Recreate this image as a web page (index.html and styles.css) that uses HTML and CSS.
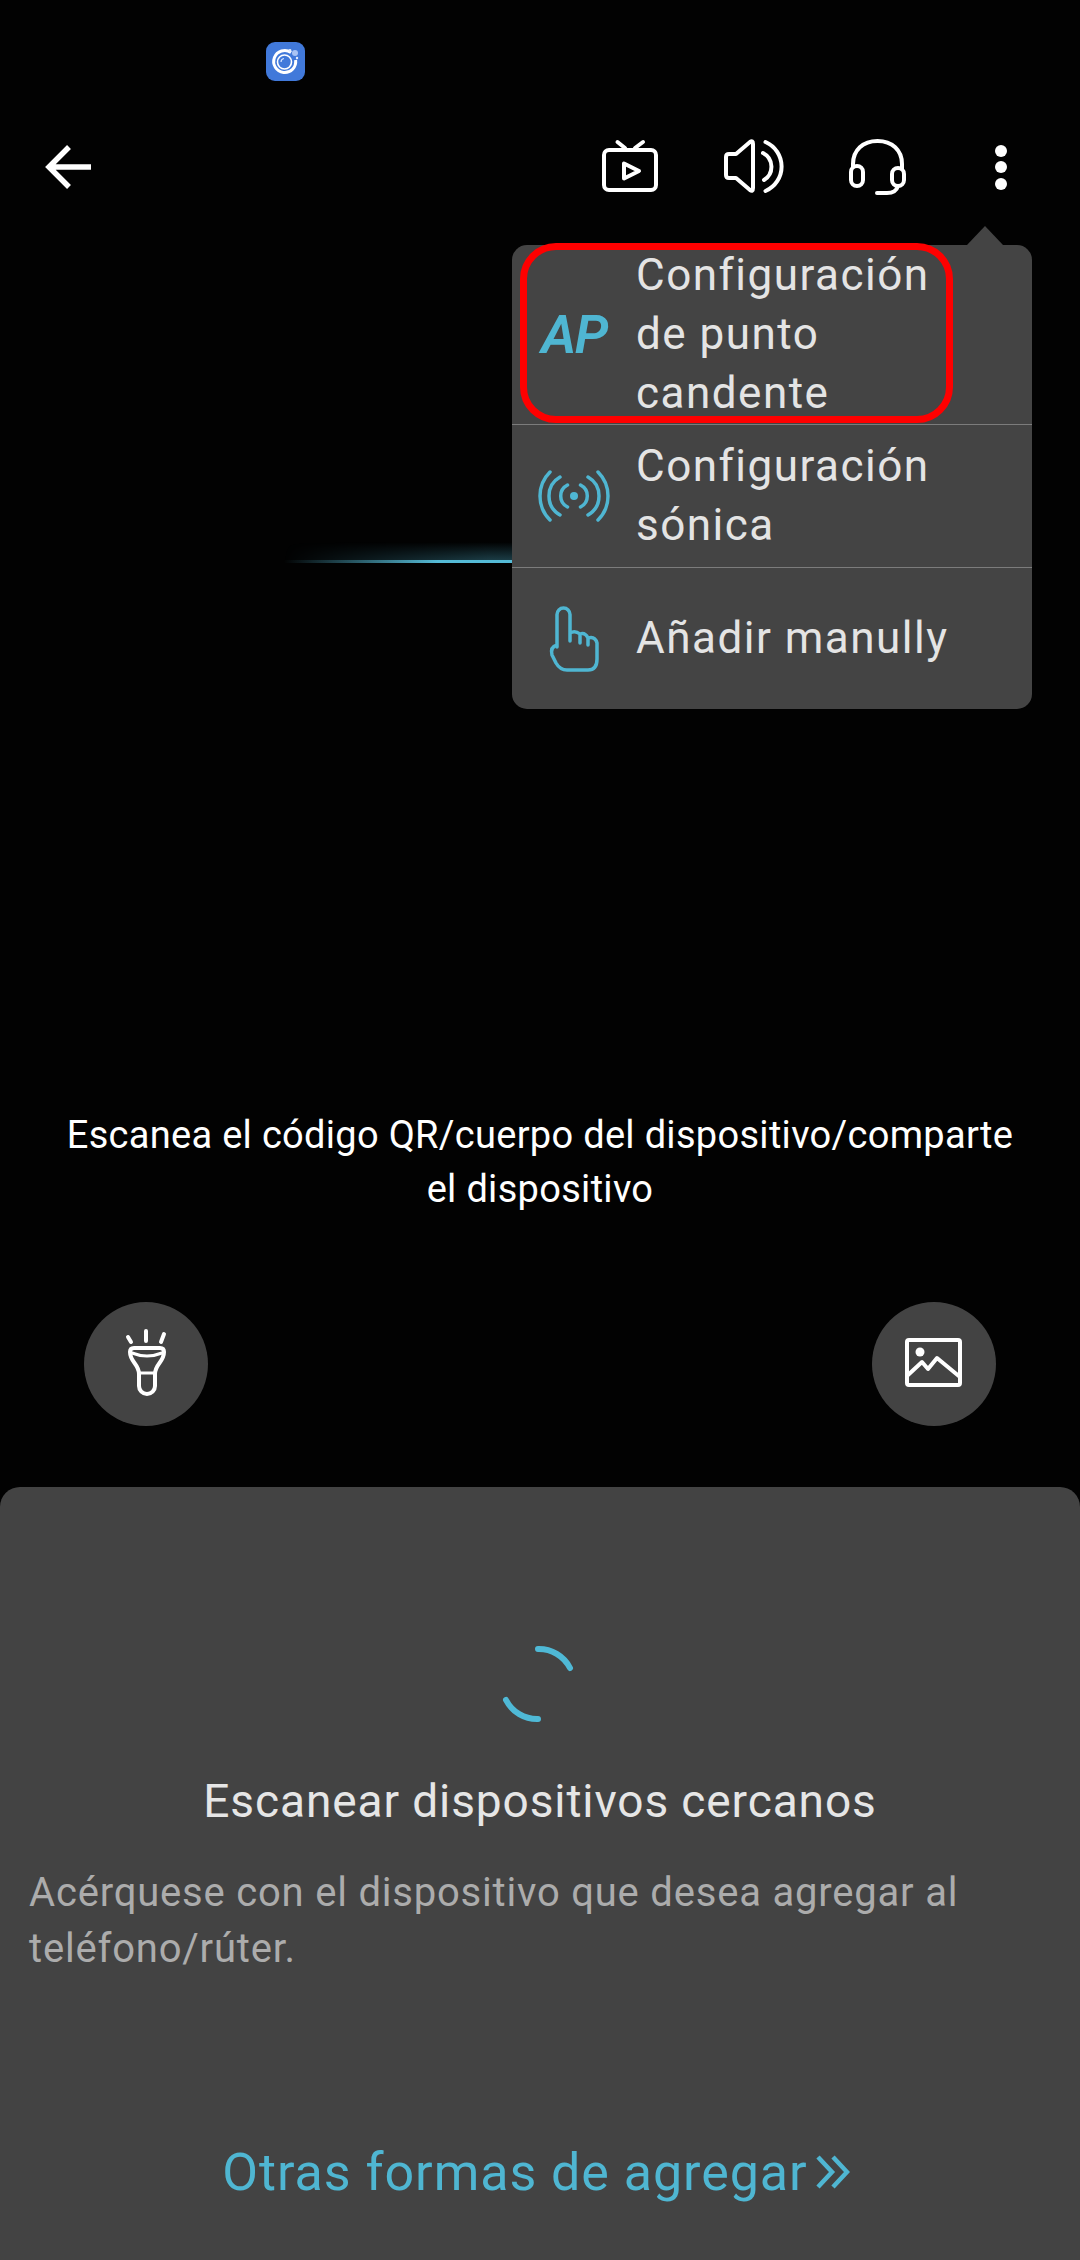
FILE: index.html
```html
<!DOCTYPE html>
<html lang="es">
<head>
<meta charset="utf-8">
<title>Escanear</title>
<link rel="stylesheet" href="styles.css">
</head>
<body>
<div class="screen">
  <div class="status">
    <svg class="app-icon" viewBox="0 0 39 39"><rect width="39" height="39" rx="9" fill="#4179da"/><path d="M25 10.500A11 11 0 1 0 29.600 18" fill="none" stroke="#fff" stroke-width="3"/><circle cx="18.500" cy="20" r="7" fill="none" stroke="#fff" stroke-width="1.600"/><path d="M15 20a3.500 3.500 0 0 1 3-3.500" fill="none" stroke="#cfe0ff" stroke-width="1.200"/><circle cx="29" cy="11" r="3" fill="#a9c4f5"/><circle cx="24" cy="8.500" r="1.400" fill="#e6eeff"/><circle cx="31" cy="16" r="1.200" fill="#e6eeff"/></svg>
  </div>
  <div class="toolbar">
    <svg class="tool" viewBox="0 0 64 64"><path d="M13 32H55M33 12L13 32L33 52" class="line wide"/></svg>
    <div class="tool-group">
      <svg class="tool" viewBox="0 0 64 64"><rect x="7" y="15" width="52" height="40" rx="5" class="line"/><path d="M20.500 7L28 13M46 7L38 13" class="line"/><path d="M27 28.500V43.500L42 36Z" class="line"/></svg>
      <svg class="tool" viewBox="0 0 64 64"><path d="M32 9Q32 5 29 7L15 19H8Q5 19 5 22V40Q5 43 8 43H15L29 55Q32 57 32 53Z" class="line"/><path d="M42 18A15.500 15.500 0 0 1 43 45M44.500 7A26.700 26.700 0 0 1 44.500 56" class="line"/></svg>
      <svg class="tool" viewBox="0 0 64 64"><path d="M8 32V29C8 15 18 6 32.500 6S57 15 57 29V34" class="line"/><rect x="6" y="31" width="12" height="20" rx="6" class="line"/><rect x="47" y="33" width="12" height="18" rx="6" class="line"/><path d="M53 51Q51 58 42 58H32" class="line"/></svg>
      <svg class="tool" viewBox="0 0 64 64"><circle cx="32" cy="16" r="6" fill="#fff"/><circle cx="32" cy="32" r="6" fill="#fff"/><circle cx="32" cy="49" r="6" fill="#fff"/></svg>
    </div>
  </div>
  <p class="hint">Escanea el código QR/cuerpo del dispositivo/comparte<br>el dispositivo</p>
  <div class="actions">
    <div class="round">
      <svg viewBox="0 0 124 124"><path d="M44 35L47 40M62 29V39M80 32L77 40" class="line"/><path d="M46 50Q46 46 50 46H76Q80 46 80 50C80 60 71 62 71 72V84A8 8 0 0 1 55 84V72C55 62 46 60 46 50Z" class="line"/><path d="M48 51Q63 57 78 51M55 71H71" class="line thin"/></svg>
    </div>
    <div class="round">
      <svg viewBox="0 0 124 124"><rect x="35" y="38" width="53" height="45" rx="2" class="line"/><circle cx="48" cy="50" r="4.500" fill="#fff"/><path d="M36 73L50 60L56 67L65 56L88 75" class="line"/></svg>
    </div>
  </div>
  <section class="panel">
    <svg class="spinner" viewBox="0 0 84 84"><path d="M42 7A35 35 0 0 1 74 26M10 58A35 35 0 0 0 42 77"/></svg>
    <h2 class="panel-title">Escanear dispositivos cercanos</h2>
    <p class="panel-text">Acérquese con el dispositivo que desea agregar al teléfono/rúter.</p>
    <div class="more">
      <span>Otras formas de agregar</span>
      <svg class="chevrons" viewBox="0 0 34 34"><path d="M2 2L16 17L2 32M17 2L31 17L17 32"/></svg>
    </div>
  </section>

  <div class="scan-line"></div>
  <div class="menu-arrow"></div>
  <div class="menu">
    <div class="menu-row row-tall">
      <span class="menu-icon ap">AP</span>
      <span class="menu-label">Configuración de punto candente</span>
    </div>
    <div class="menu-row row-mid">
      <svg class="menu-icon" viewBox="0 0 72 72"><circle cx="36" cy="36" r="4" fill="#4fb6d2"/><path class="teal" d="M29.500 25A12.300 12.300 0 0 0 29.500 47M22 17A21.900 21.900 0 0 0 22 55M12 12A33.800 33.800 0 0 0 12 60M42.500 25A12.300 12.300 0 0 1 42.500 47M50 17A21.900 21.900 0 0 1 50 55M60 12A33.800 33.800 0 0 1 60 60"/></svg>
      <span class="menu-label">Configuración sónica</span>
    </div>
    <div class="menu-row row-low">
      <svg class="menu-icon" viewBox="0 0 72 72"><path class="teal" d="M19 44V11.500A6.500 6.500 0 0 1 32 11.500V38M32 30Q37 27 42 31V40M42 31Q47 29 50 35V42M50 35Q57 33 59 40V56Q59 67 50 67H29Q22 67 18 60L14 52Q12 44 19 42"/></svg>
      <span class="menu-label">Añadir manully</span>
    </div>
  </div>
  <div class="highlight"></div>
</div>
</body>
</html>
```
FILE: styles.css
```css
* { box-sizing: border-box; }
html, body { margin: 0; padding: 0; background: #020202; }
body { font-family: Roboto, "Noto Sans", sans-serif; }
.screen { position: relative; width: 1080px; height: 2260px; overflow: hidden; display: flex; flex-direction: column; background: #020202; }
.status { height: 135px; padding: 42px 0 0 266px; flex: none; }
.app-icon { display: block; width: 39px; height: 39px; }
.toolbar { height: 64px; flex: none; display: flex; align-items: center; justify-content: space-between; padding: 0 47px 0 36px; }
.tool-group { display: flex; gap: 60px; }
.tool { display: block; width: 64px; height: 64px; }
.line { fill: none; stroke: #fff; stroke-width: 4; stroke-linecap: round; stroke-linejoin: round; }
.line.wide { stroke-width: 5.500; stroke-linecap: butt; stroke-linejoin: miter; }
.line.thin { stroke-width: 3; }
.hint { margin: 909px 0 0; font-size: 38px; line-height: 54px; color: #fff; text-align: center; letter-spacing: 0.3px; }
.actions { margin-top: 86px; display: flex; justify-content: space-between; padding: 0 84px; }
.round { width: 124px; height: 124px; border-radius: 50%; background: #434343; }
.round svg { display: block; width: 124px; height: 124px; }
.panel { margin-top: 61px; flex: 1; background: #434343; border-radius: 20px 20px 0 0; padding: 155px 29px 0; display: flex; flex-direction: column; }
.spinner { display: block; width: 84px; height: 84px; margin: 0 auto; flex: none; transform: translateX(-2px); }
.spinner path { fill: none; stroke: #4fb9d6; stroke-width: 6; stroke-linecap: round; }
.panel-title { margin: 45px 0 0; font-size: 46px; line-height: 60px; font-weight: 400; text-align: center; color: #e6e6e6; letter-spacing: 0.9px; }
.panel-text { margin: 34px 0 0; font-size: 40px; line-height: 56px; color: #acacac; letter-spacing: 0.8px; }
.more { margin-top: 160px; height: 70px; padding-right: 8px; display: flex; align-items: center; justify-content: center; gap: 8px; color: #4fb6d2; font-size: 52px; letter-spacing: 0.95px; }
.chevrons { width: 34px; height: 34px; display: block; }
.chevrons path { fill: none; stroke: #4fb6d2; stroke-width: 4.500; }
.scan-line { position: absolute; left: 284px; top: 560px; width: 512px; height: 3px; background: linear-gradient(to right, transparent 0, #55bbd6 30%, #55bbd6 70%, transparent 100%); }
.scan-line::before { content: ""; position: absolute; left: 0; right: 0; bottom: 3px; height: 18px; background: linear-gradient(to bottom, transparent, rgba(79,182,210,.32)); -webkit-mask-image: linear-gradient(to right, transparent 0, #000 40%, #000 60%, transparent 100%); mask-image: linear-gradient(to right, transparent 0, #000 40%, #000 60%, transparent 100%); }
.menu-arrow { position: absolute; left: 967px; top: 226px; width: 0; height: 0; border-left: 18px solid transparent; border-right: 18px solid transparent; border-bottom: 19px solid #444; }
.menu { position: absolute; left: 512px; top: 245px; width: 520px; height: 464px; background: #444; border-radius: 15px; display: flex; flex-direction: column; }
.menu-row { display: flex; align-items: center; padding-left: 26px; }
.row-tall { height: 180px; border-bottom: 1px solid #7c7c7c; }
.row-mid { height: 143px; border-bottom: 1px solid #7c7c7c; }
.row-low { flex: 1; }
.menu-icon { width: 72px; height: 72px; flex: none; display: block; margin-right: 26px; }
.ap { width: 72px; height: auto; font-size: 54px; line-height: 60px; font-weight: 600; font-style: italic; color: #4fb6d2; text-align: center; letter-spacing: -1.500px; }
.menu-label { width: 320px; font-size: 44px; line-height: 59px; color: #e4e4e4; letter-spacing: 1.5px; }
.teal { fill: none; stroke: #4fb6d2; stroke-width: 3.500; stroke-linecap: round; stroke-linejoin: round; }
.highlight { position: absolute; left: 520px; top: 243px; width: 433px; height: 180px; border: 7px solid #f00; border-radius: 36px; }
```
